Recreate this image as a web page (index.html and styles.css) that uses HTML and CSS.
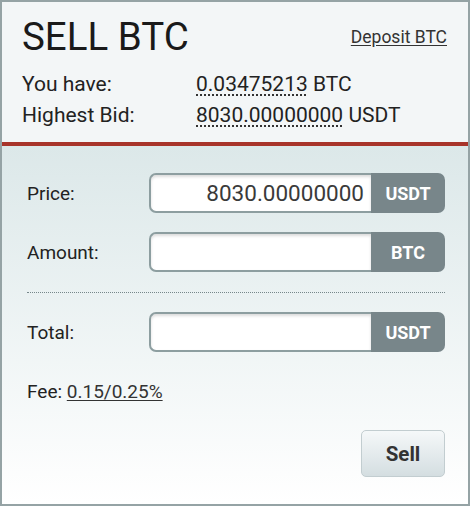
FILE: index.html
```html
<!DOCTYPE html>
<html>
<head>
<meta charset="utf-8">
<link rel="stylesheet" href="styles.css">
</head>
<body>
<div class="panel">
  <div class="head">
    <div class="title-row">
      <h1 class="title">SELL BTC</h1>
      <a class="deposit" href="#">Deposit BTC</a>
    </div>
    <div class="info">
      <div class="info-label">You have:</div>
      <div class="info-value"><span class="dotted">0.03475213</span> BTC</div>
      <div class="info-label">Highest Bid:</div>
      <div class="info-value"><span class="dotted">8030.00000000</span> USDT</div>
    </div>
  </div>
  <div class="body">
    <div class="row">
      <div class="label">Price:</div>
      <div class="group">
        <div class="field">8030.00000000</div>
        <div class="addon">USDT</div>
      </div>
    </div>
    <div class="row row-gap">
      <div class="label">Amount:</div>
      <div class="group">
        <div class="field"></div>
        <div class="addon">BTC</div>
      </div>
    </div>
    <div class="sep"></div>
    <div class="row">
      <div class="label">Total:</div>
      <div class="group">
        <div class="field"></div>
        <div class="addon">USDT</div>
      </div>
    </div>
    <div class="fee">Fee: <a href="#" class="fee-link">0.15/0.25%</a></div>
    <div class="actions">
      <button class="sell">Sell</button>
    </div>
  </div>
</div>
</body>
</html>
```

FILE: styles.css
```css
html, body {
  margin: 0;
  padding: 0;
  background: #ffffff;
}

body {
  font-family: Roboto, "Liberation Sans", Arial, sans-serif;
  color: #222;
}

.panel {
  width: 470px;
  height: 506px;
  box-sizing: border-box;
  border: 2px solid #95a3a5;
  display: flex;
  flex-direction: column;
}

.head {
  background: #f3f6f7;
  padding: 13px 21px 11px 20px;
  border-bottom: 4px solid #a8342a;
}

.title-row {
  display: flex;
  justify-content: space-between;
  align-items: flex-start;
}

.title {
  margin: 0;
  font-size: 38.5px;
  line-height: 44px;
  font-weight: 400;
  color: #1a1a1a;
}

.deposit {
  margin-top: 12px;
  font-size: 17.5px;
  line-height: 20px;
  color: #333;
  text-decoration: underline;
  text-underline-offset: 2px;
}

.info {
  margin-top: 10px;
  display: grid;
  grid-template-columns: 174px auto;
  font-size: 21px;
  line-height: 31px;
  color: #222;
}

.dotted {
  text-decoration: underline dotted #333;
  text-decoration-thickness: 2px;
  text-underline-offset: 3px;
}

.body {
  flex: 1;
  background: linear-gradient(#dce8e9, #ffffff);
  padding: 27px 23px 0 25px;
}

.row {
  display: flex;
  align-items: center;
}

.row-gap {
  margin-top: 19px;
}

.label {
  width: 122px;
  font-size: 19px;
  color: #222;
}

.group {
  flex: 1;
  display: flex;
  height: 40px;
}

.field {
  flex: 1;
  box-sizing: border-box;
  border: 2px solid #8d9ea0;
  border-right: none;
  border-radius: 7px 0 0 7px;
  background: #ffffff;
  box-shadow: inset 0 2px 3px rgba(0, 0, 0, 0.14);
  font-size: 22.5px;
  line-height: 36px;
  text-align: right;
  padding-right: 7px;
  color: #3a3a3a;
}

.addon {
  width: 74px;
  background: #78868a;
  border-radius: 0 7px 7px 0;
  color: #ffffff;
  font-weight: 700;
  font-size: 18px;
  display: flex;
  align-items: center;
  justify-content: center;
}

.sep {
  margin: 20px 0 19px 0;
  border-top: 1px dotted #76878a;
  height: 0;
}

.fee {
  margin-top: 29px;
  font-size: 19px;
  line-height: 22px;
  color: #222;
}

.fee-link {
  color: #333;
  text-decoration: underline;
  text-underline-offset: 2px;
}

.actions {
  display: flex;
  justify-content: flex-end;
  margin-top: 27px;
}

.sell {
  width: 84px;
  height: 47px;
  box-sizing: border-box;
  border: 1px solid #c2cdd0;
  border-radius: 5px;
  background: linear-gradient(#f5f8f9, #d4dee1);
  font-family: Roboto, "Liberation Sans", Arial, sans-serif;
  font-weight: 700;
  font-size: 20.5px;
  color: #333;
  padding: 0;
}
```
